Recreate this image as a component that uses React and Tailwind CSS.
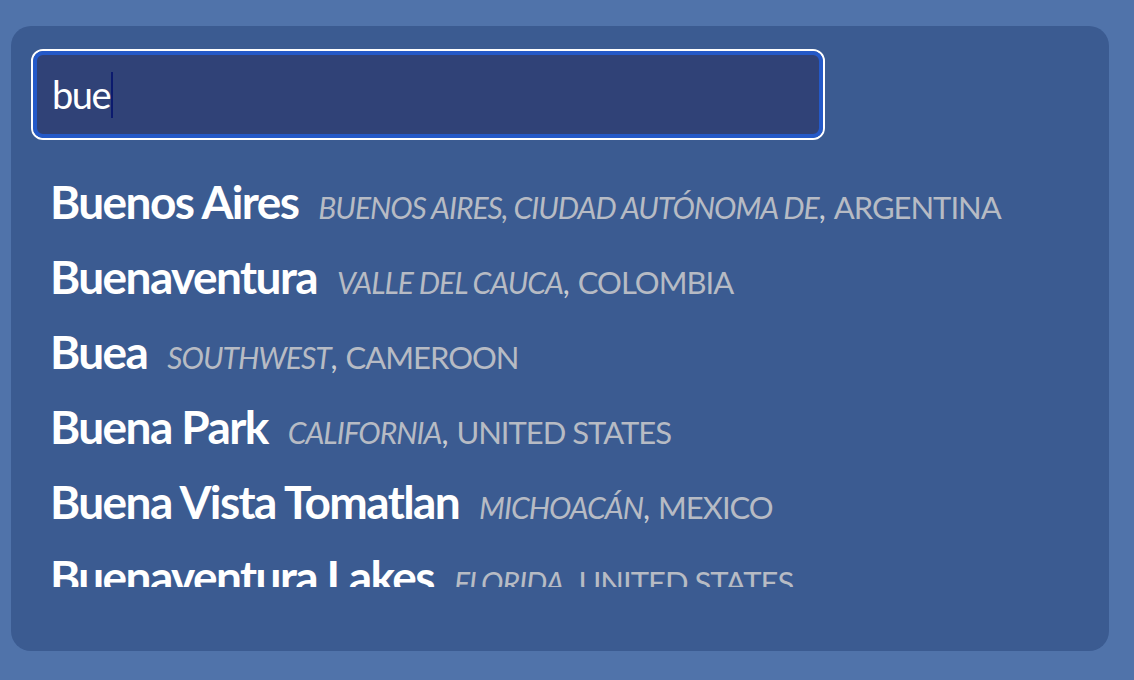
import { useState } from "react"

const cities = [
  { name: "Buenos Aires", region: "BUENOS AIRES, CIUDAD AUTÓNOMA DE", country: "ARGENTINA" },
  { name: "Buenaventura", region: "VALLE DEL CAUCA", country: "COLOMBIA" },
  { name: "Buea", region: "SOUTHWEST", country: "CAMEROON" },
  { name: "Buena Park", region: "CALIFORNIA", country: "UNITED STATES" },
  { name: "Buena Vista Tomatlan", region: "MICHOACÁN", country: "MEXICO" },
  { name: "Buenaventura Lakes", region: "FLORIDA", country: "UNITED STATES" },
  { name: "Buenavista", region: "MÉXICO", country: "MEXICO" },
]

const App = () => {
  const [query, setQuery] = useState("bue")

  return (
    <div className="min-h-[680px] w-full bg-[#5073aa] pt-[26px] pl-[11px] font-['Lato',sans-serif]">
      <div className="w-[1098px] h-[625px] rounded-[20px] bg-[#3b5b91] pt-[23px] px-[20px]">
        <div className="w-[794px] h-[91px] rounded-[12px] border-2 border-white">
          {/* visible field mirrors the input so the caret shows */}
          <label className="relative flex items-center w-full h-full rounded-[10px] border-4 border-[#2459c8] bg-[#304277] pl-[15px]">
            <span className="text-[38px] tracking-[-1.5px] text-white whitespace-pre">{query}</span>
            <span className="ml-[1px] h-[46px] w-[2px] bg-[#0b1a6e]" />
            <input
              type="text"
              value={query}
              onChange={(e) => setQuery(e.target.value)}
              className="absolute inset-0 opacity-0"
            />
          </label>
        </div>

        <ul className="mt-[24px] h-[423px] overflow-hidden pl-[19px]">
          {cities.map((city) => (
            <li key={city.name} className="flex items-baseline h-[75px] leading-[75px] whitespace-nowrap">
              <span className="text-[46px] font-bold tracking-[-1.6px] text-white">{city.name}</span>
              <span className="ml-[20px] text-[30px] italic tracking-[-1px] text-[#b7bbc4]">{city.region}</span>
              <span className="text-[31px] text-[#c9ccd2] whitespace-pre">, </span>
              <span className="text-[31px] tracking-[-1px] text-[#b7bbc4]">{city.country}</span>
            </li>
          ))}
        </ul>
      </div>
    </div>
  )
}

export default App
